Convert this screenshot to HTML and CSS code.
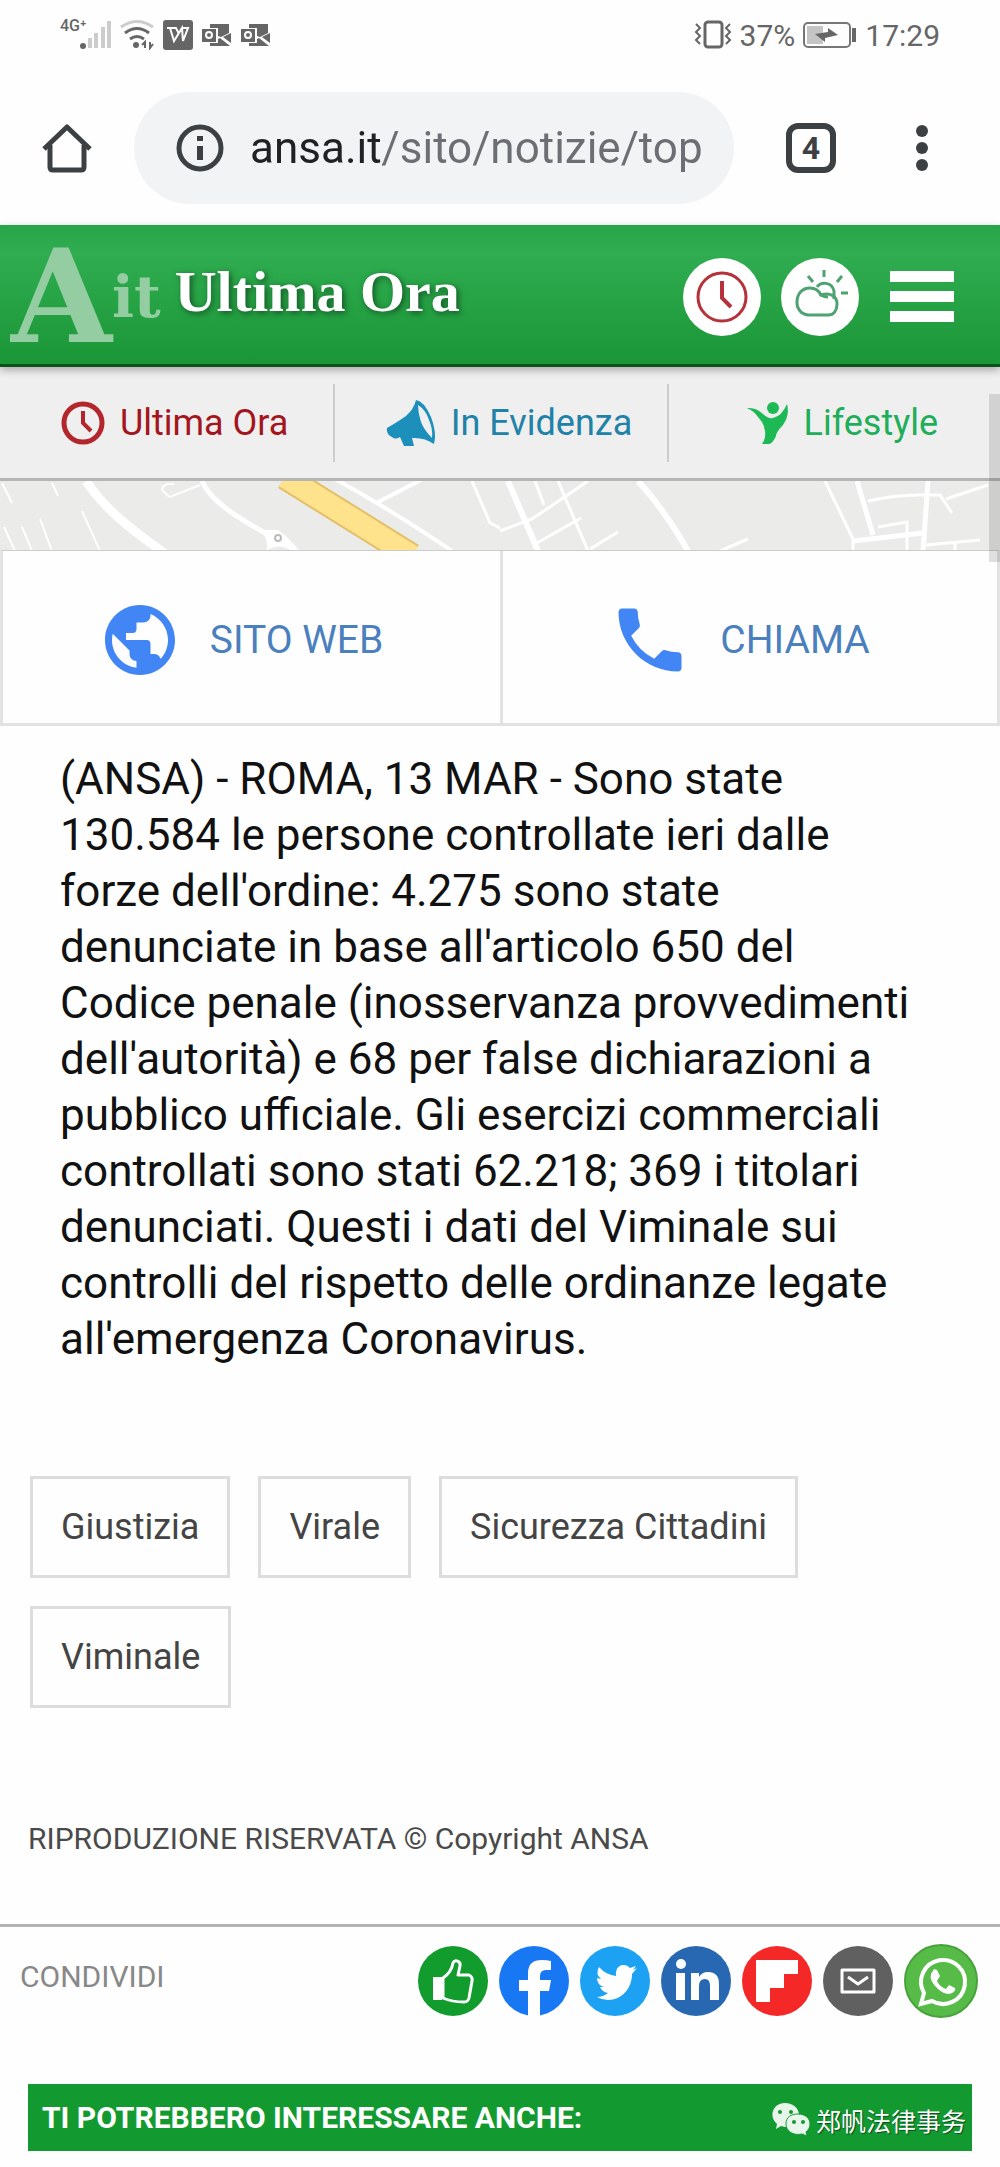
FILE: index.html
```html
<!DOCTYPE html>
<html lang="it">
<head>
    <meta charset="UTF-8">
    <meta name="viewport" content="width=device-width, initial-scale=1.0">
    <title>Ultima Ora - ANSA.it</title>
    <link rel="stylesheet" href="styles.css">
</head>
<body>
    <div class="status-bar">
        <div class="status-left">
            <span class="network">4G⁺</span>
            <svg class="signal" width="32" height="30" viewBox="0 0 32 30">
                <circle cx="4" cy="26" r="3" fill="#666"/>
                <path d="M11 28v-10M17 28v-15M24 28V7M30 28V1" stroke="#ccc" stroke-width="4"/>
            </svg>
            <svg width="34" height="30" viewBox="0 0 34 30" fill="none" stroke="#666" stroke-width="3">
                <path d="M1 7Q17-4 33 7" stroke="#ccc"/>
                <path d="M5 13q12-9 24 0M10 19q7-5 14 0"/>
                <circle cx="16" cy="25" r="3" fill="#666" stroke="none"/>
                <path d="M25 28v-6l-3 3M30 22v6l3-4" stroke-width="2"/>
            </svg>
            <svg width="30" height="30" viewBox="0 0 30 30">
                <rect width="30" height="30" rx="3" fill="#666"/>
                <path d="M4 8h9l3 6M7 8l4 13 8-13 1 13 5-13h-5" fill="none" stroke="#fff" stroke-width="2"/>
            </svg>
            <svg class="mail-app" width="30" height="24" viewBox="0 0 30 24">
                <path d="M8 1h19v9l-8 4-3-1V5H8zM21 14l8-4v10zM8 23v-3h8v-4l2-1 10 8z" fill="#666"/>
                <rect y="6" width="14" height="13" fill="#666"/>
                <circle cx="7" cy="12" r="3" fill="none" stroke="#fff" stroke-width="2"/>
            </svg>
            <svg class="mail-app" width="30" height="24" viewBox="0 0 30 24">
                <path d="M8 1h19v9l-8 4-3-1V5H8zM21 14l8-4v10zM8 23v-3h8v-4l2-1 10 8z" fill="#666"/>
                <rect y="6" width="14" height="13" fill="#666"/>
                <circle cx="7" cy="12" r="3" fill="none" stroke="#fff" stroke-width="2"/>
            </svg>
        </div>
        <div class="status-right">
            <svg width="38" height="30" viewBox="0 0 38 30" fill="none" stroke="#666">
                <rect x="11" y="2" width="17" height="25" rx="3" stroke-width="3"/>
                <path d="M2 4l4 4-4 4 4 4-4 4 4 4M36 4l-4 4 4 4-4 4 4 4-4 4" stroke-width="2"/>
            </svg>
            <span>37%</span>
            <svg class="battery" width="54" height="26" viewBox="0 0 54 26">
                <rect x="1" y="1" width="46" height="24" rx="4" fill="none" stroke="#777" stroke-width="2"/>
                <path d="M4 4h16v18H4z" fill="#c4c4c4"/>
                <path d="M12 12l13-2v-4l10 7-13 3v4z" fill="#666"/>
                <path d="M51 6v14" stroke="#666" stroke-width="4"/>
            </svg>
            <span>17:29</span>
        </div>
    </div>

    <div class="browser-bar">
        <button class="icon-button" aria-label="Home">
            <svg width="50" height="50" viewBox="0 0 50 50" fill="none" stroke="#3c4043" stroke-width="5">
                <path d="M2 26L25 4l23 22" stroke-linejoin="round"/>
                <path d="M8 22v22q0 3 3 3h28q3 0 3-3V22"/>
            </svg>
        </button>
        <div class="address">
            <svg width="48" height="48" viewBox="0 0 48 48">
                <circle cx="24" cy="24" r="21" fill="none" stroke="#3c4043" stroke-width="5"/>
                <path d="M21 12h6v5h-6zM21 22h6v14h-6z" fill="#3c4043"/>
            </svg>
            <input class="address-input" type="text" aria-label="Indirizzo" value="ansa.it/sito/notizie/top">
        </div>
        <button class="tabs-button">4</button>
        <button class="icon-button" aria-label="Menu">
            <svg width="12" height="46" viewBox="0 0 12 46" fill="#3c4043">
                <circle cx="6" cy="6" r="6"/>
                <circle cx="6" cy="23" r="6"/>
                <circle cx="6" cy="40" r="6"/>
            </svg>
        </button>
    </div>

    <header class="header">
        <a href="#" class="logo"><span class="logo-a">A</span><span class="logo-it">it</span></a>
        <h1 class="title">Ultima Ora</h1>
        <a href="#" class="round-link" aria-label="Ultima ora">
            <svg width="78" height="78" viewBox="0 0 78 78" fill="none" stroke="#b5323a" stroke-width="4">
                <circle cx="39" cy="39" r="24" stroke-width="3"/>
                <path d="M39 23v17l9 9"/>
            </svg>
        </a>
        <a href="#" class="round-link" aria-label="Meteo">
            <svg width="78" height="78" viewBox="0 0 78 78" fill="none" stroke="#4fa373" stroke-width="3">
                <path d="M27 57a12 12 0 0 1-11-13c0-8 5-14 13-14 6 0 9 3 11 7 9-3 16 1 16 9 0 6-3 11-9 11z"/>
                <path d="M36 29c4-6 15-5 17 4v8M39 36q3 3 8 3"/>
                <path d="M43 12v7M27 18l5 6M61 18l-5 6M60 35h7"/>
            </svg>
        </a>
        <button class="menu-button" aria-label="Apri menu">
            <span></span>
            <span></span>
            <span></span>
        </button>
    </header>

    <nav class="nav">
        <a href="#" class="nav-link red">
            <svg width="44" height="44" viewBox="0 0 44 44" fill="none" stroke="#b3262b">
                <circle cx="22" cy="22" r="19" stroke-width="5"/>
                <path d="M22 10v12l8 8" stroke-width="4"/>
            </svg>
            Ultima Ora
        </a>
        <a href="#" class="nav-link blue">
            <svg width="50" height="46" viewBox="0 0 50 46">
                <path d="M1 28q12-7 19-12Q28 9 30 0q8 1 15 17 6 16 3 27Q38 37 26 38l2 8H18l-4-9q-5 3-8 0-6-3-5-9z" fill="#1c8fbb"/>
                <path d="M32 5q8 5 11 15 4 9 3 18-8-8-11-16-3-9-3-17z" fill="#efefef"/>
            </svg>
            In Evidenza
        </a>
        <a href="#" class="nav-link green">
            <svg width="42" height="42" viewBox="0 0 42 42" fill="#1db954">
                <circle cx="26" cy="6" r="6"/>
                <path d="M0 6q9-1 16 6 5 5 10 4 9-2 14-14 3 11-4 21-7 7-7 11-3 7-7 8h-7q4-5 3-13-1-8-7-14Q7 9 0 6z"/>
            </svg>
            Lifestyle
        </a>
    </nav>

    <main>
        <svg class="map" viewBox="0 0 1000 69" preserveAspectRatio="xMidYMid slice" fill="none" stroke="#fff">
            <path d="M86 0C102 24 125 45 170 76" stroke-width="9"/>
            <path d="M202 0C210 20 240 38 265 52" stroke-width="5"/>
            <path d="M200 4l-30 12q-6-4-8-8 2-6 12-5M2 2l10 20M52 2l6 13M4 46l11 24M22 46l10 24M40 38l12 32M82 30l18 40" stroke-width="2"/>
            <path d="M260 49l18 0 8 6 14 15h-8q-13-9-26 0 4-10-6-21z" fill="#fff" stroke="none"/>
            <circle cx="278" cy="57" r="3" stroke="#bbb" stroke-width="2"/>
            <path d="M285-4L412 75" stroke="#e3c068" stroke-width="26"/>
            <path d="M285-4L412 75" stroke="#ffe28c" stroke-width="22"/>
            <path d="M335-2Q390 28 452 70M378 21L423-2" stroke-width="4"/>
            <path d="M472 0l18 42 10 5M500 50l32-12 56-38" stroke-width="3"/>
            <path d="M508 0l30 70M638 0q26 28 50 70" stroke-width="6"/>
            <path d="M535 0l9 24M558 0l30 70M537 62l44-25M590 68l28-17M720 70l28-12M825 0l28 58v12" stroke-width="3"/>
            <path d="M857 0l16 54M853 60l70-8M928 0l-5 70" stroke-width="5"/>
            <path d="M868 20q30-7 58-6l14 0 12 18M946 18l42-14M878 46l29-5v28M926 64l54-5M955 62v8" stroke-width="3"/>
        </svg>

        <div class="actions">
            <a href="#" class="action">
                <svg width="84" height="84" viewBox="0 0 24 24" fill="#4285f4">
                    <path d="M12 2C6.480 2 2 6.480 2 12s4.480 10 10 10 10-4.480 10-10S17.520 2 12 2zm-1 17.930c-3.950-.490-7-3.850-7-7.930 0-.620.080-1.210.210-1.790L9 15v1c0 1.100.900 2 2 2v1.930zm6.900-2.540c-.260-.810-1-1.390-1.900-1.390h-1v-3c0-.550-.450-1-1-1H8v-2h2c.550 0 1-.450 1-1V7h2c1.100 0 2-.900 2-2v-.410c2.930 1.190 5 4.060 5 7.410 0 2.080-.800 3.970-2.100 5.390z"/>
                </svg>
                SITO WEB
            </a>
            <a href="#" class="action">
                <svg width="84" height="84" viewBox="0 0 24 24" fill="#4285f4">
                    <path d="M6.540 5c.060.890.210 1.760.450 2.590l-1.200 1.200c-.410-1.200-.670-2.470-.760-3.790h1.510M20 15.500c-1.250 0-2.450-.200-3.570-.570a1.020 1.020 0 0 0-1.020.240l-2.200 2.200a15.050 15.050 0 0 1-6.590-6.590l2.200-2.210a.960.960 0 0 0 .250-1A11.360 11.360 0 0 1 8.500 4c0-.550-.450-1-1-1H4c-.550 0-1 .450-1 1 0 9.390 7.610 17 17 17 .550 0 1-.450 1-1v-3.500c0-.550-.450-1-1-1z"/>
                    <path d="M4 4h4v5L5 11zM20 20v-4h-5l-2 3z"/>
                </svg>
                CHIAMA
            </a>
        </div>

        <p class="article">(ANSA) - ROMA, 13 MAR - Sono state 130.584 le persone controllate ieri dalle forze dell'ordine: 4.275 sono state denunciate in base all'articolo 650 del Codice penale (inosservanza provvedimenti dell'autorità) e 68 per false dichiarazioni a pubblico ufficiale. Gli esercizi commerciali controllati sono stati 62.218; 369 i titolari denunciati. Questi i dati del Viminale sui controlli del rispetto delle ordinanze legate all'emergenza Coronavirus.</p>

        <div class="tags">
            <a href="#" class="tag">Giustizia</a>
            <a href="#" class="tag">Virale</a>
            <a href="#" class="tag">Sicurezza Cittadini</a>
            <a href="#" class="tag">Viminale</a>
        </div>

        <p class="copyright">RIPRODUZIONE RISERVATA © Copyright ANSA</p>

        <div class="share">
            <span class="share-label">CONDIVIDI</span>
            <button class="share-button" aria-label="Mi piace">
                <svg width="70" height="70" viewBox="0 0 70 70">
                    <circle cx="35" cy="35" r="35" fill="#129c2e"/>
                    <path d="M15 31h9v23h-9z" fill="#fff"/>
                    <path d="M25 32c6-4 9-9 10-15 2-4 8-2 7 3l-2 9h11q4 2 3 6l-3 17q-1 4-5 4-12 0-21-4z" fill="none" stroke="#fff" stroke-width="3" stroke-linejoin="round"/>
                </svg>
            </button>
            <button class="share-button" aria-label="Facebook">
                <svg width="70" height="70" viewBox="0 0 70 70">
                    <circle cx="35" cy="35" r="35" fill="#1877f2"/>
                    <path d="M29 70V45h-9V34h9v-7q0-13 14-13 5 0 9 1v9h-5q-6 0-6 6v4h11l-2 11h-9v25z" fill="#fff"/>
                </svg>
            </button>
            <button class="share-button" aria-label="Twitter">
                <svg width="70" height="70" viewBox="0 0 70 70">
                    <circle cx="35" cy="35" r="35" fill="#1da1f2"/>
                    <path d="M57 22l-5 6c0 14-10 26-24 26q-6 0-11-3 6 0 11-4-6-1-8-6h4q-7-2-7-9l4 1q-6-5-2-12 7 8 17 9c-1-13 10-13 14-8l6-2-3 4z" fill="#fff"/>
                </svg>
            </button>
            <button class="share-button" aria-label="LinkedIn">
                <svg width="70" height="70" viewBox="0 0 70 70">
                    <circle cx="35" cy="35" r="35" fill="#2867b2"/>
                    <circle cx="20" cy="18" r="5" fill="#fff"/>
                    <path d="M15 27h9v27h-9zM30 27h8v4q3-5 9-5 11 0 11 12v16h-9V40q0-7-5-7-6 0-6 7v14h-8z" fill="#fff"/>
                </svg>
            </button>
            <button class="share-button" aria-label="Flipboard">
                <svg width="70" height="70" viewBox="0 0 70 70">
                    <circle cx="35" cy="35" r="35" fill="#f52828"/>
                    <path d="M14 14h42v14H42v14H28v14H14z" fill="#fff"/>
                </svg>
            </button>
            <button class="share-button" aria-label="Email">
                <svg width="70" height="70" viewBox="0 0 70 70">
                    <circle cx="35" cy="35" r="35" fill="#606060"/>
                    <path d="M19 24h32v22H19zM25 31l10 7 10-7" fill="none" stroke="#fff" stroke-width="3" stroke-linejoin="round"/>
                </svg>
            </button>
            <button class="share-button" aria-label="WhatsApp">
                <svg width="74" height="74" viewBox="0 0 74 74">
                    <circle cx="37" cy="37" r="36" fill="#57bb48" stroke="#48a33c" stroke-width="2"/>
                    <path d="M20 49a22 22 0 1 1 8 8l-11 3z" fill="none" stroke="#fff" stroke-width="4"/>
                    <path d="M30 25l3 1 3 6-3 5q3 6 9 8l3-4 6 3q1 3-3 5-6 3-14-4-9-8-7-15z" fill="#fff"/>
                </svg>
            </button>
        </div>

        <div class="related">
            <h2 class="related-title">TI POTREBBERO INTERESSARE ANCHE:</h2>
            <span class="wechat">
                <svg width="40" height="36" viewBox="0 0 40 36">
                    <path d="M14 1c8 0 14 5 14 12s-6 12-14 12l-4-1-5 3 1-5c-9-8-4-21 8-21z" fill="#e8f5ea"/>
                    <path d="M27 12c7 0 12 4 12 10 0 4-2 6-4 8l1 4-5-2c-9 2-16-3-16-10s5-10 12-10z" fill="#e8f5ea" stroke="#129a30" stroke-width="1"/>
                    <g fill="#129a30"><circle cx="9" cy="10" r="2"/><circle cx="20" cy="10" r="2"/><circle cx="23" cy="20" r="2"/><circle cx="32" cy="20" r="2"/></g>
                </svg>
                郑帆法律事务
            </span>
        </div>
    </main>

    <div class="scroll-thumb"></div>
</body>
</html>
```
FILE: styles.css
```css
* {
    box-sizing: border-box;
}

body {
    margin: 0;
    font-family: Roboto, Arial, sans-serif;
    background: #fefefe;
    color: #111;
    position: relative;
}

a {
    text-decoration: none;
}

button {
    flex-shrink: 0;
    border: none;
    background: none;
    padding: 0;
    font-family: inherit;
    cursor: pointer;
}

svg {
    display: block;
    flex-shrink: 0;
}

/* Status bar */
.status-bar {
    display: flex;
    justify-content: space-between;
    height: 70px;
    padding: 0 60px;
    color: #666;
    font-size: 30px;
}

.status-left,
.status-right {
    display: flex;
    align-items: center;
}

.status-left {
    gap: 9px;
}

.network {
    font-size: 16px;
    font-weight: 500;
    align-self: flex-start;
    margin-top: 16px;
}

.signal {
    margin-left: -16px;
}

.status-right {
    gap: 8px;
}

/* Browser toolbar */
.browser-bar {
    display: flex;
    align-items: center;
    height: 155px;
    padding: 0 72px 0 42px;
}

.address {
    flex: 1;
    min-width: 0;
    display: flex;
    align-items: center;
    height: 112px;
    margin: 0 52px 0 42px;
    padding: 0 27px 0 42px;
    border-radius: 56px;
    background: #f1f3f4;
}

.address-input {
    flex: 1;
    min-width: 0;
    margin-left: 26px;
    padding: 0;
    border: none;
    outline: none;
    font-family: inherit;
    font-size: 44px;
    color: transparent;
    background: linear-gradient(to right, #202124 133px, #6b6e72 133px);
    -webkit-background-clip: text;
    background-clip: text;
}

.tabs-button {
    width: 50px;
    height: 50px;
    margin-right: 80px;
    border: 6px solid #3c4043;
    border-radius: 12px;
    color: #3c4043;
    font-size: 32px;
    line-height: 38px;
    font-weight: bold;
}

/* Site header */
.header {
    display: flex;
    align-items: center;
    height: 142px;
    padding: 4px 46px 0 11px;
    background: linear-gradient(#27a548, #2fad50 20%, #1b9637);
    border-bottom: 3px solid #0c521c;
    box-shadow: 0 3px 8px rgba(0, 0, 0, 0.3);
    position: relative;
}

.logo {
    display: flex;
    align-items: center;
    font-family: "DejaVu Serif", serif;
    font-weight: bold;
    color: #93cda1;
}

.logo-a {
    font-size: 130px;
    line-height: 132px;
}

.logo-it {
    font-size: 58px;
    line-height: 60px;
}

.title {
    flex: 1;
    margin: 0 0 10px 14px;
    font-family: "Liberation Serif", serif;
    font-size: 58px;
    line-height: 66px;
    color: #fff;
    text-shadow: 2px 2px 6px rgba(0, 0, 0, 0.5);
}

.round-link {
    margin-right: 20px;
    border-radius: 50%;
    background: #fff;
}

.menu-button {
    display: flex;
    flex-direction: column;
    gap: 9px;
    width: 64px;
    margin-left: 11px;
}

.menu-button span {
    height: 11px;
    background: #fff;
}

/* Section nav */
.nav {
    display: grid;
    grid-template-columns: repeat(3, 1fr);
    align-items: center;
    height: 114px;
    background: #efefef;
    border-bottom: 3px solid #b5b5b5;
}

.nav-link {
    display: flex;
    align-items: center;
    justify-content: center;
    gap: 15px;
    height: 78px;
    padding-left: 16px;
    font-size: 36px;
    white-space: nowrap;
}

.nav-link + .nav-link {
    border-left: 2px solid #ccc;
}

.red {
    color: #a3161d;
}

.blue {
    color: #1f82a8;
}

.green {
    color: #1fae5a;
}

/* Map and contacts */
.map {
    width: 100%;
    height: 69px;
    background: #ebebe9;
}

.actions {
    display: grid;
    grid-template-columns: repeat(2, 1fr);
    border: 3px solid #e2e2e2;
    border-top: 1px solid #ccc;
}

.action {
    display: flex;
    align-items: center;
    justify-content: center;
    gap: 28px;
    height: 172px;
    padding: 6px 22px 0 0;
    font-size: 39px;
    color: #4a80bd;
}

.action + .action {
    border-left: 3px solid #e2e2e2;
}

/* Article */
.article {
    margin: 0;
    padding: 25px 60px 0;
    font-size: 44px;
    line-height: 56px;
}

.tags {
    display: flex;
    flex-wrap: wrap;
    gap: 28px;
    padding: 109px 30px 0;
}

.tag {
    padding: 28px;
    border: 3px solid #ddd;
    font-size: 36px;
    line-height: 40px;
    color: #444;
}

.copyright {
    margin: 0;
    padding: 111px 28px 65px;
    font-size: 30px;
    line-height: 40px;
    color: #4a4a4a;
}

/* Share bar */
.share {
    display: flex;
    align-items: center;
    gap: 11px;
    padding: 17px 22px 66px 20px;
    border-top: 3px solid #b0b4b2;
}

.share-label {
    flex: 1;
    align-self: flex-start;
    font-size: 30px;
    line-height: 66px;
    color: #888;
}

.related {
    display: flex;
    align-items: center;
    justify-content: space-between;
    height: 67px;
    margin: 0 28px 15px;
    padding: 0 6px 0 14px;
    background: #129a30;
    color: #fff;
}

.related-title {
    margin: 0;
    font-size: 30px;
    line-height: 40px;
    font-weight: bold;
}

.wechat {
    display: flex;
    align-items: center;
    gap: 5px;
    padding-top: 4px;
    font-family: "Noto Sans CJK SC", sans-serif;
    font-size: 25px;
    text-shadow: 1px 1px 1px rgba(0, 0, 0, 0.5);
}

.scroll-thumb {
    position: absolute;
    top: 394px;
    right: 0;
    width: 11px;
    height: 168px;
    background: rgba(0, 0, 0, 0.12);
}
```
